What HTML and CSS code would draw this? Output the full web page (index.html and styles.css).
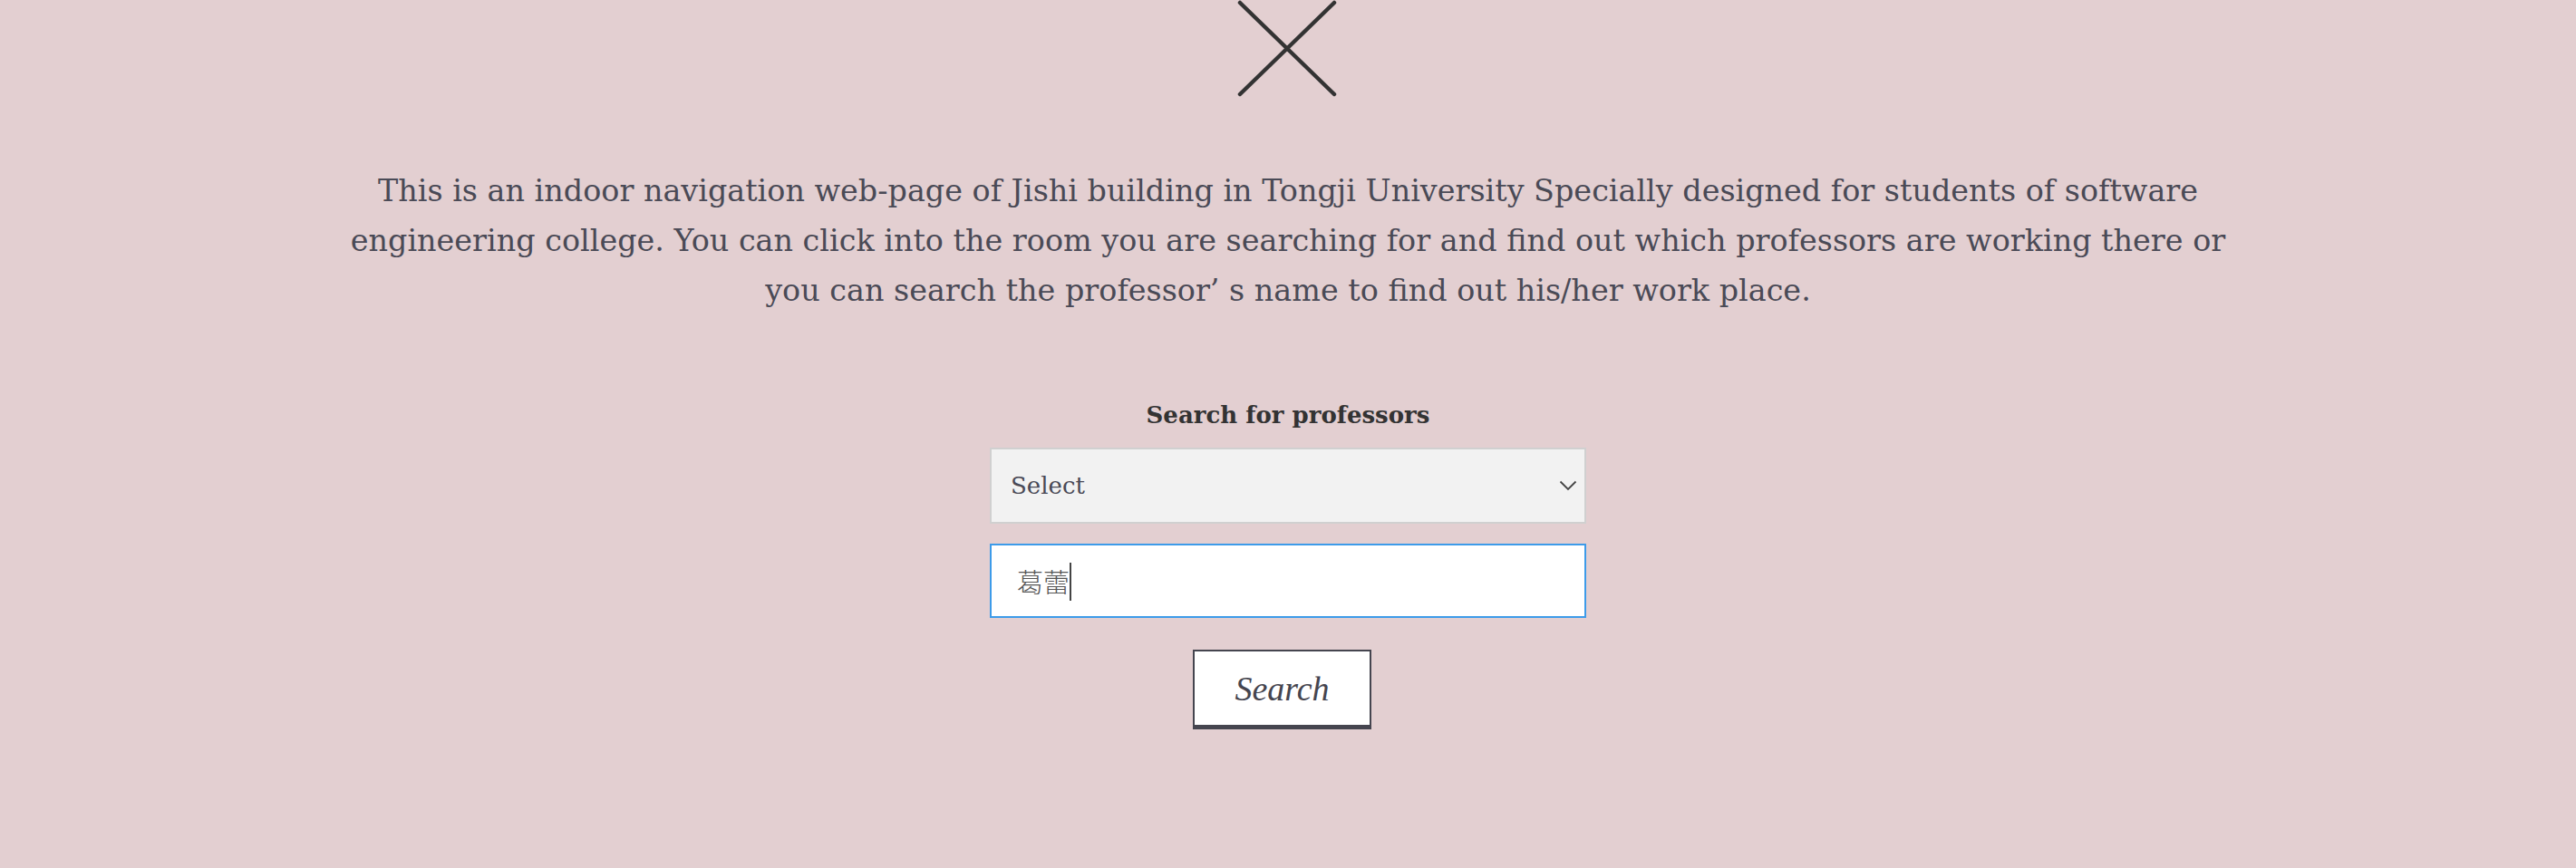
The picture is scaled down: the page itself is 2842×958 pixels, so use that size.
FILE: index.html
```html
<!DOCTYPE html>
<html lang="en">
<head>
<meta charset="utf-8">
<title>Jishi Building Indoor Navigation</title>
<link rel="stylesheet" href="styles.css">
</head>
<body>
<main class="page">
  <div class="close" aria-label="close">
    <svg width="110" height="108" viewBox="0 0 110 108">
      <line x1="3" y1="3" x2="107" y2="104" stroke="#333" stroke-width="4.5" stroke-linecap="round"/>
      <line x1="107" y1="3" x2="3" y2="104" stroke="#333" stroke-width="4.5" stroke-linecap="round"/>
    </svg>
  </div>
  <p class="intro">This is an indoor navigation web-page of Jishi building in Tongji University Specially designed for students of software engineering college. You can click into the room you are searching for and find out which professors are working there or you can search the professor’ s name to find out his/her work place.</p>
  <form class="search">
    <label class="search-label">Search for professors</label>
    <div class="select-wrap">
      <select class="select"><option>Select</option></select>
      <svg class="chevron" width="20" height="12" viewBox="0 0 20 12"><polyline points="1.5,1.5 10,10 18.5,1.5" fill="none" stroke="#444" stroke-width="1.8"/></svg>
    </div>
    <div class="input-wrap">
      <input class="name-input" type="text" value="葛蕾">
      <span class="caret"></span>
    </div>
    <button class="search-btn" type="button">Search</button>
  </form>
</main>
</body>
</html>
```

FILE: styles.css
```css
html, body {
  margin: 0;
  padding: 0;
  background: #e3cfd1;
}
body {
  font-family: "DejaVu Serif", "Noto Sans CJK SC", serif;
  color: #4a4a56;
}
.page {
  display: flex;
  flex-direction: column;
  align-items: center;
}
.close {
  height: 108px;
  margin-left: -2px;
}
.close svg {
  display: block;
}
.intro {
  width: 2120px;
  margin: 75px 0 0;
  font-family: "DejaVu Serif", serif;
  font-size: 33.4px;
  line-height: 55px;
  text-align: center;
  color: #4a4a56;
}
.search {
  display: flex;
  flex-direction: column;
  align-items: center;
  margin-top: 93px;
}
.search-label {
  font-family: "DejaVu Serif", serif;
  font-weight: bold;
  font-size: 26px;
  line-height: 34px;
  color: #333;
}
.select-wrap {
  position: relative;
  margin-top: 19px;
}
.select {
  display: block;
  appearance: none;
  -webkit-appearance: none;
  width: 658px;
  height: 84px;
  box-sizing: border-box;
  border: 2px solid #d0d0d0;
  border-radius: 0;
  background: #f2f2f2;
  padding: 0 0 0 21px;
  font-family: "DejaVu Serif", serif;
  font-size: 26px;
  color: #4a4a56;
}
.chevron {
  position: absolute;
  right: 10px;
  top: 36px;
}
.input-wrap {
  position: relative;
  margin-top: 22px;
}
.name-input {
  display: block;
  width: 658px;
  height: 82px;
  box-sizing: border-box;
  border: 2px solid #3d9be9;
  border-radius: 0;
  background: #fff;
  padding: 0 0 0 28px;
  font-family: "Noto Sans CJK SC", sans-serif;
  font-weight: 300;
  font-size: 29px;
  color: #555;
  outline: none;
}
.caret {
  position: absolute;
  left: 88px;
  top: 21px;
  width: 2px;
  height: 42px;
  background: #444;
}
.search-btn {
  margin-top: 35px;
  margin-left: -13px;
  width: 197px;
  height: 88px;
  box-sizing: border-box;
  border: 2px solid #45454f;
  border-bottom-width: 5px;
  border-radius: 0;
  background: #fff;
  font-family: "Liberation Serif", serif;
  font-style: italic;
  font-size: 38px;
  color: #45454f;
  padding: 0;
}
```
